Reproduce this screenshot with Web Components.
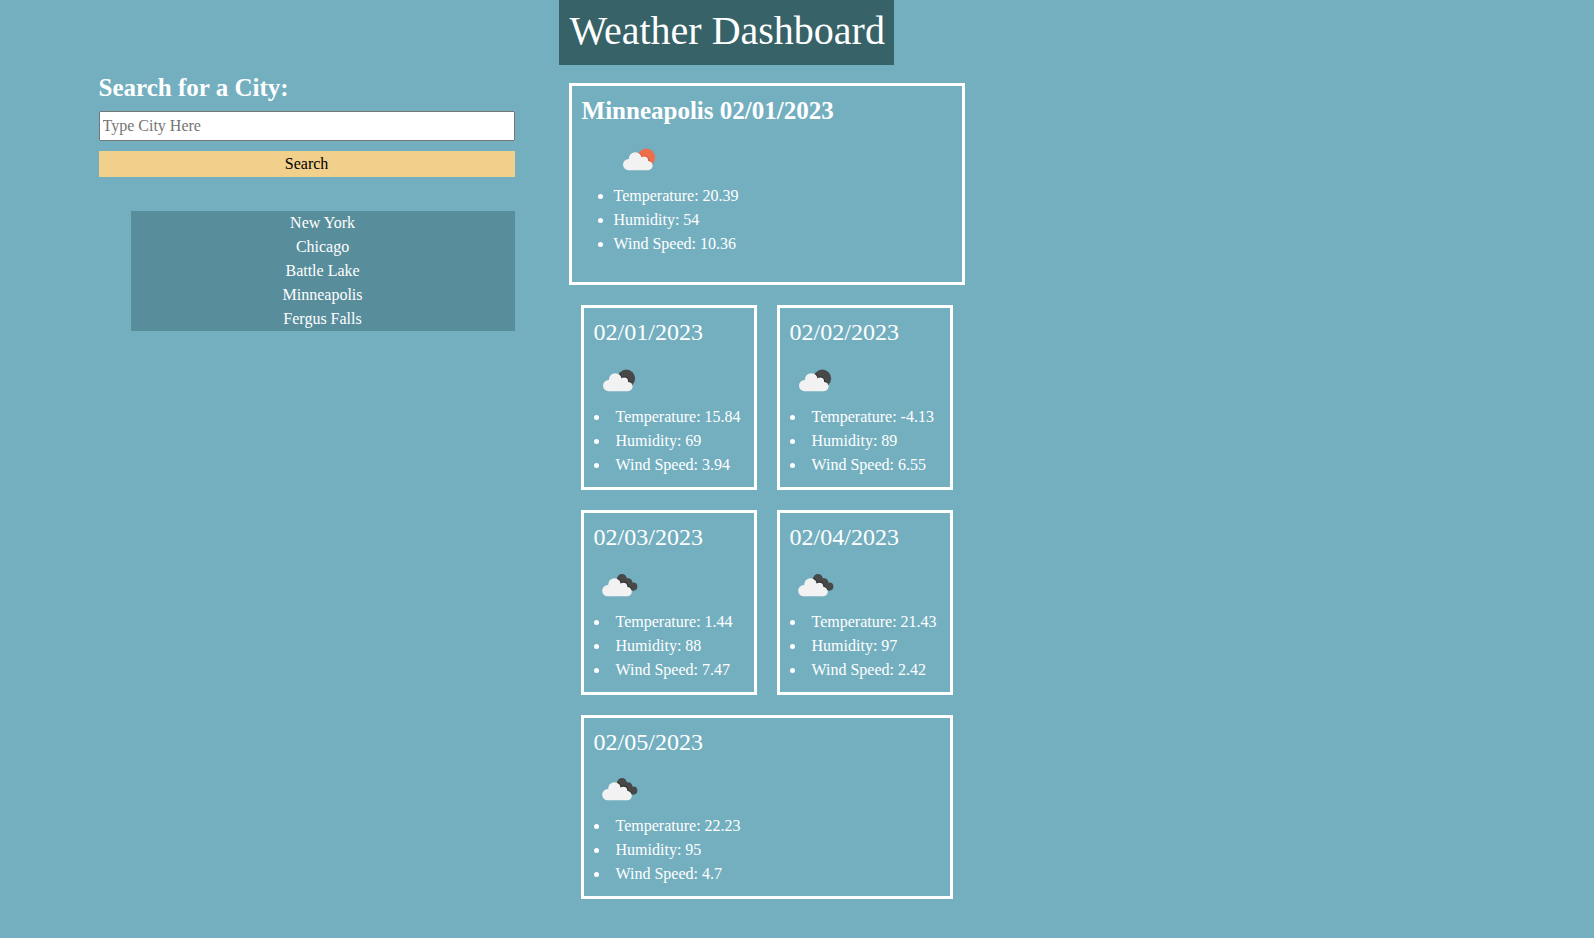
<!DOCTYPE html>
<html lang="en">
<head>
<meta charset="utf-8">
<title>Weather Dashboard</title>
<style>
body{margin:0;min-height:100vh;background:#74afc0;color:#fff;font:16px/24px "Liberation Serif","Times New Roman",serif}
</style>
</head>
<body>
<weather-app></weather-app>
<script>
const define = (name, html, setup) => customElements.define(name, class extends HTMLElement {
  connectedCallback() {
    if (this.shadowRoot) return;
    const t = document.createElement('template');
    t.innerHTML = html;
    this.attachShadow({mode: 'open'}).append(t.content.cloneNode(true));
    if (setup) setup(this, this.shadowRoot);
  }
});

define('weather-icon', `
<style>
:host{display:block;width:50px;height:50px}
svg{display:block}
.sun,.clouds{display:none}
:host([kind=day]) .sun,:host([kind=night]) .sun,:host([kind=clouds]) .clouds{display:block}
.sun{fill:#ec6e4c;--rim:#e4502a}
:host([kind=night]) .sun{fill:#484848;--rim:#303030}
.clouds{fill:#484848;--rim:#303030}
.rim{fill:var(--rim)}
:host([kind=clouds]) .front{transform:translate(-.8px,.1px)}
</style>
<svg width="50" height="50" viewBox="0 0 50 50">
  <defs>
    <clipPath id="disc"><circle cx="32.3" cy="23.4" r="8.8"/></clipPath>
    <clipPath id="back"><circle cx="27.9" cy="18.9" r="4.9"/><circle cx="34.2" cy="22.4" r="4.2"/><circle cx="39.3" cy="26.6" r="4.1"/><path d="M25 21L38.6 30.6L41 25L29 14.5Z"/></clipPath>
  </defs>
  <g class="sun" clip-path="url(#disc)">
    <rect width="50" height="50"/>
    <g class="rim"><circle cx="21.3" cy="24.6" r="7.2"/><circle cx="30.6" cy="26.2" r="4.6"/><circle cx="34" cy="31.6" r="5.3"/></g>
  </g>
  <g class="clouds" clip-path="url(#back)">
    <rect width="50" height="50"/>
    <g class="rim"><circle cx="20.6" cy="24.6" r="7.2"/><circle cx="29.8" cy="26.2" r="4.6"/><circle cx="33.3" cy="31.6" r="5.3"/></g>
  </g>
  <g class="front" fill="#f2f2f2">
    <circle cx="14.6" cy="30.6" r="5.6"/><circle cx="21.3" cy="24.6" r="6.4"/><circle cx="30.2" cy="26.5" r="3.9"/><circle cx="34" cy="31.6" r="4.6"/>
    <path d="M14.6 36.2V28L20 25H30L34 27V36.2Z"/>
  </g>
</svg>`);

define('city-search', `
<style>
:host{display:flex;flex-direction:column}
h2{margin:0 0 8px;font-size:25px;line-height:30px}
input,button{box-sizing:border-box;width:100%;margin:0;font:inherit}
input{height:30px}
button{height:26px;margin-top:10px;padding:1px 6px;border:0;background:#f0d08a;color:#000}
</style>
<h2>Search for a City:</h2>
<input type="text" placeholder="Type City Here">
<button type="button">Search</button>`);

define('search-history', `
<style>
:host{display:block;padding:34px 0 0 32px}
ul{margin:0;padding:0;list-style:none;text-align:center;background:#588d9b}
</style>
<ul></ul>`, (el, root) => {
  for (const city of el.getAttribute('cities').split(',')) {
    const li = document.createElement('li');
    li.textContent = city;
    root.querySelector('ul').append(li);
  }
});

define('current-weather', `
<style>
:host{display:block;box-sizing:border-box;height:202px;border:3px solid #fff;padding:10px}
h2{margin:0 0 8px;font-size:25px;line-height:30px}
ul{margin:0 0 16px;padding-left:32px}
</style>
<h2><slot></slot></h2>
<ul><weather-icon kind="day"></weather-icon>
<li>Temperature: 20.39</li><li>Humidity: 54</li><li>Wind Speed: 10.36</li></ul>`);

define('forecast-card', `
<style>
:host{display:block;border:3px solid #fff;padding:10px}
h3{margin:0 0 8px;font-size:24px;font-weight:400;line-height:28.8px}
ul{margin:0;padding:0;list-style:disc inside}
</style>
<h3><slot></slot></h3>
<weather-icon></weather-icon>
<ul><li class="t"></li><li class="h"></li><li class="w"></li></ul>`, (el, root) => {
  root.querySelector('weather-icon').setAttribute('kind', el.getAttribute('kind'));
  root.querySelector('.t').textContent = 'Temperature: ' + el.getAttribute('temp');
  root.querySelector('.h').textContent = 'Humidity: ' + el.getAttribute('humidity');
  root.querySelector('.w').textContent = 'Wind Speed: ' + el.getAttribute('wind');
});

define('forecast-grid', `
<style>
:host{display:grid;grid-template-columns:176px 176px;gap:20px;padding:20px 12px}
::slotted(:last-child){grid-column:1 / -1}
</style>
<slot></slot>`);

define('weather-app', `
<style>
:host{display:block}
header{display:flex;margin-left:559.4px}
h1{box-sizing:border-box;width:335px;height:65px;margin:0;padding:7px 10px 10px;background:#366268;font-size:40px;font-weight:400;line-height:48px;white-space:nowrap}
main{display:grid;grid-template-columns:416px 396px;column-gap:54px;padding:8px 0 0 98.55px;align-items:start}
.weather{padding-top:10px}
</style>
<header><h1>Weather Dashboard</h1></header>
<main>
  <section>
    <city-search></city-search>
    <search-history cities="New York,Chicago,Battle Lake,Minneapolis,Fergus Falls"></search-history>
  </section>
  <section class="weather">
    <current-weather>Minneapolis 02/01/2023</current-weather>
    <forecast-grid>
      <forecast-card kind="night" temp="15.84" humidity="69" wind="3.94">02/01/2023</forecast-card>
      <forecast-card kind="night" temp="-4.13" humidity="89" wind="6.55">02/02/2023</forecast-card>
      <forecast-card kind="clouds" temp="1.44" humidity="88" wind="7.47">02/03/2023</forecast-card>
      <forecast-card kind="clouds" temp="21.43" humidity="97" wind="2.42">02/04/2023</forecast-card>
      <forecast-card kind="clouds" temp="22.23" humidity="95" wind="4.7">02/05/2023</forecast-card>
    </forecast-grid>
  </section>
</main>`);
</script>
</body>
</html>
